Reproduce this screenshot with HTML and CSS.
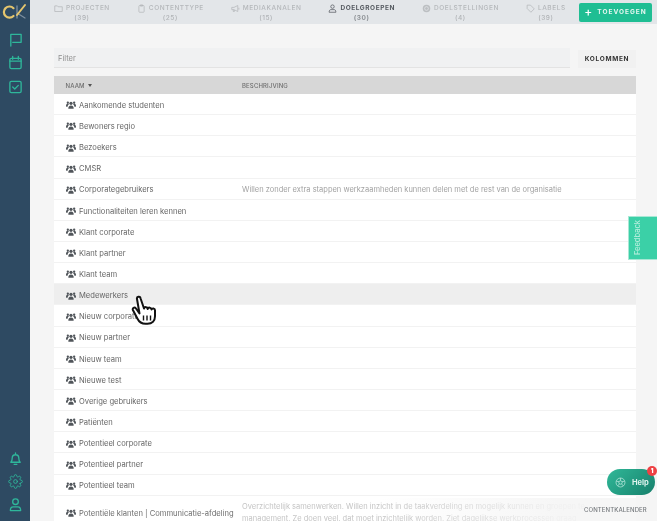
FILE: index.html
```html
<!DOCTYPE html>
<html lang="nl">
<head>
<meta charset="utf-8">
<title>Doelgroepen</title>
<link rel="stylesheet" href="styles.css">
</head>
<body>
<svg class="defs" width="0" height="0" aria-hidden="true">
  <symbol id="users" viewBox="0 0 24 18">
    <circle cx="12" cy="5" r="3.800"/><circle cx="4.400" cy="3.600" r="2.800"/><circle cx="19.600" cy="3.600" r="2.800"/>
    <path d="M5.600 18c-.6-5 1.800-8 6.400-8s7 3 6.400 8z"/>
    <path d="M0 11c0-3 1.500-4.800 4-4.800 1.200 0 2.200.4 3 1.100-1.800 1.400-3 3.400-3.200 5.700H1a1 1 0 0 1-1-1zM24 11c0-3-1.500-4.800-4-4.800-1.200 0-2.200.4-3 1.100 1.800 1.400 3 3.400 3.200 5.700H23a1 1 0 0 0 1-1z"/>
  </symbol>
</svg>
<div class="app">
  <aside class="sidebar">
    <div class="side-top">
      <svg class="logo" viewBox="0 0 30 24"><path class="logo-c" d="M13.500 8.200A5.600 5.600 0 1 0 13.500 16"/><path class="logo-k" d="M17 6v12M17 13l8 5"/><path class="logo-v" d="M17 15l8-10"/></svg>
      <svg class="nav-icon" viewBox="0 0 16 16"><path d="M3 15V2.500h11v8.500H5"/></svg>
      <svg class="nav-icon" viewBox="0 0 16 16"><rect x="2" y="3.500" width="12" height="11" rx="1.500"/><path d="M2 6.500h12M5 1.500v3M11 1.500v3"/></svg>
      <svg class="nav-icon" viewBox="0 0 16 16"><rect x="2" y="2.500" width="12" height="12" rx="1.500"/><path d="M5 8.500l2.200 2.200L11 6.800"/></svg>
    </div>
    <div class="side-bottom">
      <svg class="nav-icon" viewBox="0 0 16 16"><path d="M3 12c1.200-1 1.500-2 1.500-4.500a3.500 3.500 0 0 1 7 0c0 2.500.3 3.500 1.500 4.500zM6.500 14.200h3M8 2v2"/></svg>
      <svg class="nav-icon" viewBox="0 0 24 24"><circle cx="12" cy="12" r="3"/><path d="M19.400 15a1.650 1.650 0 0 0 .33 1.820l.06.06a2 2 0 0 1 0 2.830 2 2 0 0 1-2.830 0l-.06-.06a1.650 1.650 0 0 0-1.820-.33 1.650 1.650 0 0 0-1 1.510V21a2 2 0 0 1-2 2 2 2 0 0 1-2-2v-.09A1.650 1.650 0 0 0 9 19.400a1.650 1.650 0 0 0-1.820.33l-.06.06a2 2 0 0 1-2.830 0 2 2 0 0 1 0-2.830l.06-.06a1.650 1.650 0 0 0 .33-1.820 1.650 1.650 0 0 0-1.510-1H3a2 2 0 0 1-2-2 2 2 0 0 1 2-2h.09A1.650 1.650 0 0 0 4.600 9a1.650 1.650 0 0 0-.33-1.820l-.06-.06a2 2 0 0 1 0-2.830 2 2 0 0 1 2.830 0l.06.06a1.650 1.650 0 0 0 1.820.33H9a1.650 1.650 0 0 0 1-1.510V3a2 2 0 0 1 2-2 2 2 0 0 1 2 2v.09a1.650 1.650 0 0 0 1 1.510 1.650 1.650 0 0 0 1.820-.33l.06-.06a2 2 0 0 1 2.830 0 2 2 0 0 1 0 2.830l-.06.06a1.650 1.650 0 0 0-.33 1.820V9a1.650 1.650 0 0 0 1.510 1H21a2 2 0 0 1 2 2 2 2 0 0 1-2 2h-.09a1.650 1.650 0 0 0-1.510 1z"/></svg>
      <svg class="nav-icon" viewBox="0 0 16 16"><circle cx="8" cy="5" r="3"/><path d="M2.500 14.500c0-3 1.500-4 3-4h5c1.500 0 3 1 3 4z"/></svg>
    </div>
  </aside>
  <main class="main">
    <header class="topbar">
      <nav class="tabs">
        <a class="tab"><span class="tab-label"><svg class="tab-icon" viewBox="0 0 12 12"><path d="M1 2.500h3.500l1 1.200H11v6.300H1z"/></svg>PROJECTEN</span><span class="tab-count">(39)</span></a>
        <a class="tab"><span class="tab-label"><svg class="tab-icon" viewBox="0 0 12 12"><rect x="2.500" y="2" width="7" height="9" rx="1"/><path d="M4.500 1.200h3v1.600h-3z"/></svg>CONTENTTYPE</span><span class="tab-count">(25)</span></a>
        <a class="tab"><span class="tab-label"><svg class="tab-icon" viewBox="0 0 12 12"><path d="M1 4.500h3l5-2.500v8L4 7.500H1zM3 7.500V10h1.500V8M10.500 5v2.500"/></svg>MEDIAKANALEN</span><span class="tab-count">(15)</span></a>
        <a class="tab tab-active"><span class="tab-label"><svg class="tab-icon" viewBox="0 0 12 12"><circle cx="6" cy="3.500" r="2.300"/><path d="M1.500 11c0-2.500 1-3.500 2.500-3.500h4c1.500 0 2.500 1 2.500 3.500z"/></svg>DOELGROEPEN</span><span class="tab-count">(30)</span></a>
        <a class="tab"><span class="tab-label"><svg class="tab-icon tab-icon-fill" viewBox="0 0 12 12"><circle cx="6" cy="6" r="5"/><circle class="ring" cx="6" cy="6" r="2.500"/></svg>DOELSTELLINGEN</span><span class="tab-count">(4)</span></a>
        <a class="tab"><span class="tab-label"><svg class="tab-icon" viewBox="0 0 12 12"><path d="M1.500 1.500h4.500l5 5-4.500 4.500-5-5z"/></svg>LABELS</span><span class="tab-count">(39)</span></a>
      </nav>
      <button class="add-btn"><span class="plus">+</span>TOEVOEGEN</button>
    </header>
    <section class="content">
      <div class="toolbar">
        <div class="filter">Filter</div>
        <button class="columns-btn">KOLOMMEN</button>
      </div>
      <div class="table">
        <div class="thead">
          <div class="col-name">NAAM <span class="sort"></span></div>
          <div class="col-desc">BESCHRIJVING</div>
        </div>
        <div class="row"><div class="col-name"><svg class="uicon"><use href="#users"/></svg>Aankomende studenten</div><div class="col-desc"></div></div>
        <div class="row"><div class="col-name"><svg class="uicon"><use href="#users"/></svg>Bewoners regio</div><div class="col-desc"></div></div>
        <div class="row"><div class="col-name"><svg class="uicon"><use href="#users"/></svg>Bezoekers</div><div class="col-desc"></div></div>
        <div class="row"><div class="col-name"><svg class="uicon"><use href="#users"/></svg>CMSR</div><div class="col-desc"></div></div>
        <div class="row"><div class="col-name"><svg class="uicon"><use href="#users"/></svg>Corporategebruikers</div><div class="col-desc">Willen zonder extra stappen werkzaamheden kunnen delen met de rest van de organisatie</div></div>
        <div class="row"><div class="col-name"><svg class="uicon"><use href="#users"/></svg>Functionaliteiten leren kennen</div><div class="col-desc"></div></div>
        <div class="row"><div class="col-name"><svg class="uicon"><use href="#users"/></svg>Klant corporate</div><div class="col-desc"></div></div>
        <div class="row"><div class="col-name"><svg class="uicon"><use href="#users"/></svg>Klant partner</div><div class="col-desc"></div></div>
        <div class="row"><div class="col-name"><svg class="uicon"><use href="#users"/></svg>Klant team</div><div class="col-desc"></div></div>
        <div class="row row-hover"><div class="col-name"><svg class="uicon"><use href="#users"/></svg>Medewerkers</div><div class="col-desc"></div></div>
        <div class="row"><div class="col-name"><svg class="uicon"><use href="#users"/></svg>Nieuw corporate</div><div class="col-desc"></div></div>
        <div class="row"><div class="col-name"><svg class="uicon"><use href="#users"/></svg>Nieuw partner</div><div class="col-desc"></div></div>
        <div class="row"><div class="col-name"><svg class="uicon"><use href="#users"/></svg>Nieuw team</div><div class="col-desc"></div></div>
        <div class="row"><div class="col-name"><svg class="uicon"><use href="#users"/></svg>Nieuwe test</div><div class="col-desc"></div></div>
        <div class="row"><div class="col-name"><svg class="uicon"><use href="#users"/></svg>Overige gebruikers</div><div class="col-desc"></div></div>
        <div class="row"><div class="col-name"><svg class="uicon"><use href="#users"/></svg>Patiënten</div><div class="col-desc"></div></div>
        <div class="row"><div class="col-name"><svg class="uicon"><use href="#users"/></svg>Potentieel corporate</div><div class="col-desc"></div></div>
        <div class="row"><div class="col-name"><svg class="uicon"><use href="#users"/></svg>Potentieel partner</div><div class="col-desc"></div></div>
        <div class="row"><div class="col-name"><svg class="uicon"><use href="#users"/></svg>Potentieel team</div><div class="col-desc"></div></div>
        <div class="row row-tall"><div class="col-name"><svg class="uicon"><use href="#users"/></svg>Potentiële klanten | Communicatie-afdeling</div><div class="col-desc">Overzichtelijk samenwerken. Willen inzicht in de taakverdeling en mogelijk kunnen en groepen te<br>management. Ze doen veel, dat moet inzichtelijk worden. Ziet dagelijkse werkprocessen graag</div></div>
      </div>
    </section>
  </main>
</div>
<div class="bottom-fade"></div>
<div class="calendar-link">CONTENTKALENDER</div>
<div class="feedback"><span>Feedback</span></div>
<div class="help">
  <svg class="help-icon" viewBox="0 0 16 16"><circle cx="8" cy="8" r="6.500"/><circle cx="8" cy="8" r="2.500"/><path d="M8 1.500v4M14 6l-4 1M12 13l-2.500-3.200M4 13l2.500-3.200M2 6l4 1"/></svg>
  <span>Help</span>
  <b class="badge">1</b>
</div>
<svg class="cursor" viewBox="0 0 26 30"><path d="M8.500 18.500 5 13.500c-1.500-2-4-.300-3 1.800l4.500 8.500c1.500 3 4 5 8 5h2c4.500 0 7.500-3 7.500-7.500v-6c0-2.300-3-2.500-3.500-.7 0-2.300-3.300-2.700-3.800-.6 0-2.300-3.400-2.500-3.700-.5L9.500 3.200C9 .8 5.500 1.500 6 4z"/><path class="cursor-lines" d="M12.500 20.500v5M16 20.500v5M19.500 20.500v5"/></svg>
</body>
</html>
```
FILE: styles.css
```css
* { box-sizing: border-box; }
html, body { margin: 0; height: 521px; overflow: hidden; background: #f5f5f5; }
body { font-family: Inter, "Liberation Sans", sans-serif; color: #555; filter: blur(0.45px); }
.defs { position: absolute; }

.app { display: flex; height: 521px; }

.sidebar {
  width: 30px; flex: none; background: #2e4a62;
  display: flex; flex-direction: column; justify-content: space-between;
  padding-bottom: 9px;
}
.side-top, .side-bottom { display: flex; flex-direction: column; align-items: center; }
.side-top { gap: 8.500px; }
.side-bottom { gap: 8px; }
.logo { width: 30px; height: 24px; fill: none; stroke-linecap: round; margin-bottom: -1px; }
.logo-c { stroke: #e5c66e; stroke-width: 2.200; }
.logo-k { stroke: #7d8f9f; stroke-width: 1.300; }
.logo-v { stroke: #e5c66e; stroke-width: 2; }
.nav-icon { width: 15px; height: 15px; fill: none; stroke: #2fb79b; stroke-width: 1.400; stroke-linejoin: round; stroke-linecap: round; }

.main { flex: 1; min-width: 0; display: flex; flex-direction: column; }

.topbar { height: 24px; flex: none; background: #e3e6e9; display: flex; justify-content: space-between; align-items: center; padding: 0 5px 0 24px; }
.tabs { display: flex; gap: 27px; min-width: 0; padding-top: 2px; }
.tab { display: flex; flex-direction: column; align-items: center; font-size: 6.500px; letter-spacing: .55px; color: #b4b7ba; font-weight: 500; line-height: 10px; white-space: nowrap; }
.tab-label { display: flex; align-items: center; }
.tab-count { font-size: 6.500px; color: #b0b3b6; }
.tab-icon { width: 9px; height: 9px; margin-right: 3px; fill: none; stroke: #b4b7ba; stroke-width: 1; }
.tab-icon-fill { fill: #bcbfc2; stroke: none; }
.ring { fill: none; stroke: #e3e6e9; stroke-width: 1; }
.tab-active { color: #555a60; font-weight: 700; }
.tab-active .tab-count { color: #8d9195; }
.tab-active .tab-icon { stroke: #555a60; }

.add-btn { width: 73px; flex: none; height: 19px; border: 0; border-radius: 2px; background: #1fbe93; color: #e6f7f1; font: 700 6.500px Inter, "Liberation Sans", sans-serif; letter-spacing: 1px; display: flex; align-items: center; justify-content: center; padding: 0; }
.plus { font-size: 12px; font-weight: 500; margin-right: 5px; letter-spacing: 0; line-height: 1; color: #fff; }

.content { padding: 24px 21px 0 24px; flex: 1; min-height: 0; }
.toolbar { display: flex; align-items: center; gap: 8px; height: 20px; margin-bottom: 8px; }
.filter { flex: 1; height: 20px; background: #f0f1f2; border-bottom: 1px solid #e3e3e3; padding: 1px 0 0 4px; font-size: 7.500px; line-height: 19px; color: #8f8f8f; }
.columns-btn { width: 58px; height: 18px; margin-top: 2px; border: 0; background: #f1f1f1; color: #333; font: 700 6.500px Inter, "Liberation Sans", sans-serif; letter-spacing: .7px; padding: 0; }

.table { background: #fff; }
.thead { height: 18px; background: #d7d7d7; display: flex; align-items: center; font-size: 6px; font-weight: 500; color: #6e6e6e; letter-spacing: .15px; }
.row { height: 21.150px; padding-top: 2.500px; display: flex; align-items: center; border-bottom: 1px solid #f2f2f2; font-size: 7.600px; color: #666; }
.col-name { width: 188px; flex: none; padding-left: 11.500px; display: flex; align-items: center; white-space: nowrap; }
.col-desc { flex: 1; min-width: 0; color: #6e6e6e; white-space: nowrap; overflow: hidden; }
.row .col-desc { font-size: 7.500px; color: #a2a2a2; }
.row-hover { background: #eeeeee; }
.row-tall { height: 34px; padding-top: 2px; }
.row-tall .col-desc { line-height: 12px; color: #c4c4c4; }
.row-tall .col-name { color: #6e6e6e; }
.uicon { width: 10px; height: 8px; margin-right: 3.500px; fill: #50555a; flex: none; }
.sort { display: inline-block; width: 0; height: 0; margin-left: 3px; margin-top: 1px; border: 2.500px solid transparent; border-top: 3px solid #555; border-bottom: 0; }

.bottom-fade { position: fixed; left: 380px; right: 0; bottom: 0; height: 23px; background: linear-gradient(to right, rgba(245,245,245,0), rgba(245,245,245,.9) 65%); }
.calendar-link { position: fixed; left: 584px; top: 506px; font-size: 6px; font-weight: 500; color: #75797d; letter-spacing: .1px; }
.feedback { position: fixed; left: 628px; top: 216px; width: 29px; height: 44px; background: #3bd0a7; border: 1px solid #a8e8d5; border-right: 0; display: flex; align-items: center; padding-left: 4px; color: #b7eedd; font-size: 7.500px; font-weight: 500; }
.feedback span { writing-mode: vertical-rl; transform: rotate(180deg); }
.help { position: fixed; left: 607px; top: 469px; width: 48px; height: 26px; border-radius: 13px; background: linear-gradient(135deg, #30b898, #17806c); display: flex; align-items: center; gap: 6px; padding-left: 8px; color: #dff3ee; font-size: 7.500px; font-weight: 700; }
.help-icon { width: 11px; height: 11px; fill: none; stroke: #b9e7dc; stroke-width: 1.100; flex: none; }
.badge { position: absolute; right: -2px; top: -3px; width: 10px; height: 10px; border-radius: 50%; background: #ee4144; color: #fff; font-size: 6px; line-height: 10px; text-align: center; }
.cursor { position: fixed; left: 131px; top: 295px; width: 26px; height: 30px; fill: #fff; stroke: #111; stroke-width: 2; stroke-linejoin: round; }
.cursor-lines { fill: none; stroke-width: 1.400; }
```
